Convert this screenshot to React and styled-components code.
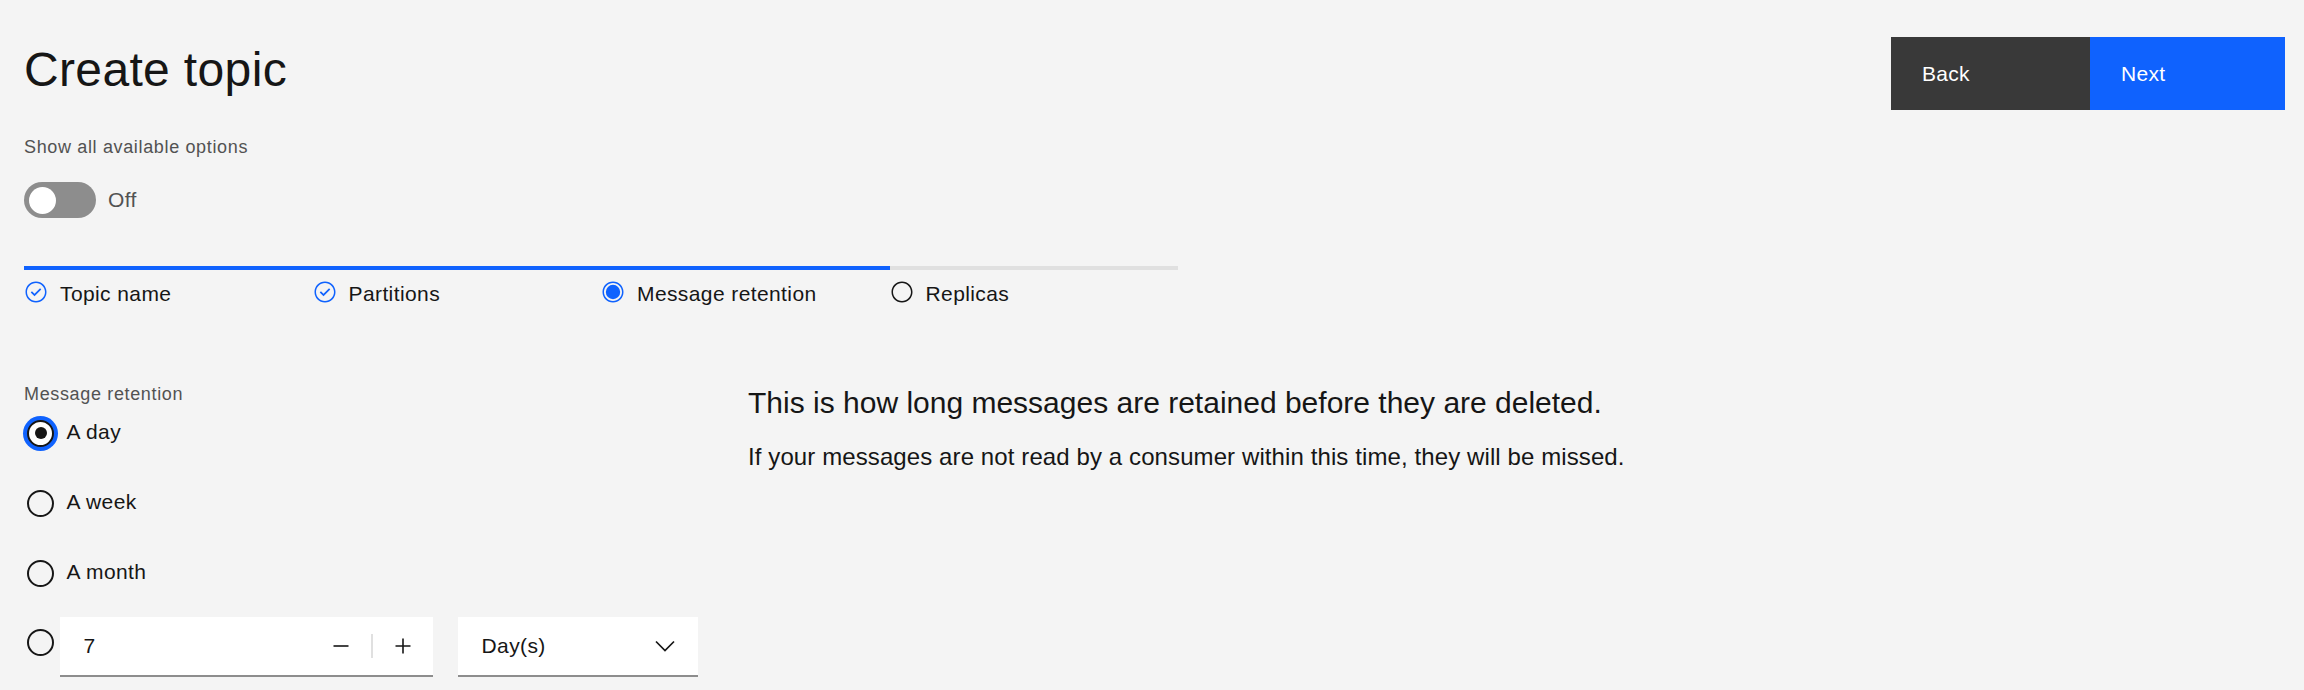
import React from "react"
import styled, { createGlobalStyle } from "styled-components"

const GlobalStyle = createGlobalStyle`
  body {
    margin: 0;
    background: #f4f4f4;
    color: #161616;
    font-family: "Liberation Sans", Arial, sans-serif;
  }
`

const Page = styled.div`
  padding: 37px 19px 0 24px;
`

const Header = styled.header`
  display: flex;
  justify-content: space-between;
  align-items: flex-start;
`

const Title = styled.h1`
  margin: 3px 0 0;
  font-size: 48px;
  line-height: 60px;
  font-weight: 400;
  letter-spacing: 0.35px;
`

const SmallLabel = styled.div`
  font-size: 18px;
  line-height: 24px;
  letter-spacing: 0.65px;
  color: #525252;
  margin-top: ${(p) => p.$top || 0}px;
`

const ToggleRow = styled.div`
  display: flex;
  align-items: center;
  gap: 12px;
  margin-top: 23px;
`

const Track = styled.div`
  width: 72px;
  height: 36px;
  border-radius: 18px;
  background: #8d8d8d;
  display: flex;
  align-items: center;
  padding-left: 4.5px;
  box-sizing: border-box;
`

const Knob = styled.span`
  width: 27px;
  height: 27px;
  border-radius: 50%;
  background: #fff;
`

const ToggleText = styled.span`
  font-size: 21px;
  letter-spacing: 0.4px;
  color: #525252;
`

const ButtonSet = styled.div`
  display: flex;
`

const Button = styled.button`
  width: ${(p) => p.$w}px;
  height: 73px;
  border: 0;
  padding: 0 0 0 31px;
  text-align: left;
  font-family: inherit;
  font-size: 21px;
  letter-spacing: 0.3px;
  color: #fff;
  background: ${(p) => (p.$primary ? "#0f62fe" : "#393939")};
`

const Steps = styled.ol`
  display: flex;
  list-style: none;
  margin: 48px 0 0;
  padding: 0;
`

const Step = styled.li`
  width: 288.5px;
  border-top: 4px solid ${(p) => (p.$done ? "#0f62fe" : "#e0e0e0")};
  padding-top: 10px;
  display: flex;
  align-items: flex-start;
  gap: 12px;
`

const StepText = styled.span`
  font-size: 21px;
  line-height: 24px;
  letter-spacing: 0.4px;
  margin-top: 2px;
`

const Body = styled.div`
  display: grid;
  grid-template-columns: 700px 1fr;
  column-gap: 24px;
  margin-top: 76px;
`

const Options = styled.div`
  display: flex;
  flex-direction: column;
`

const Option = styled.label`
  display: flex;
  align-items: flex-start;
  margin-top: ${(p) => p.$top}px;
`

const Radio = styled.span`
  flex: none;
  width: 27px;
  height: 27px;
  box-sizing: border-box;
  border-radius: 50%;
  border: 2px solid #161616;
  margin: ${(p) => p.$offset || 0}px 0 0 3px;
  background: ${(p) => (p.$checked ? "#fff" : "transparent")};
  display: flex;
  align-items: center;
  justify-content: center;
  box-shadow: ${(p) => (p.$checked ? "0 0 0 4px #0f62fe" : "none")};

  &::after {
    content: "";
    display: ${(p) => (p.$checked ? "block" : "none")};
    width: 12px;
    height: 12px;
    border-radius: 50%;
    background: #161616;
  }
`

const OptionText = styled.span`
  font-size: 21px;
  line-height: 24px;
  letter-spacing: 0.4px;
  margin-left: 12.5px;
`

const Field = styled.div`
  height: 60px;
  box-sizing: border-box;
  background: #fff;
  border-bottom: 2px solid #8d8d8d;
  display: flex;
  align-items: center;
  font-size: 21px;
  letter-spacing: 0.4px;
  width: ${(p) => p.$w}px;
  margin-left: ${(p) => p.$ml}px;
  padding-left: 24px;
`

const FieldValue = styled.span`
  flex: 1;
`

const StepButton = styled.span`
  width: 60px;
  height: 58px;
  display: flex;
  align-items: center;
  justify-content: center;
`

const Divider = styled.span`
  width: 1.5px;
  height: 24px;
  background: #e0e0e0;
`

const Chevron = styled.span`
  width: 43px;
  display: flex;
  justify-content: flex-start;
`

const Help = styled.div`
  padding-top: 1px;
`

const HelpTitle = styled.p`
  margin: 0;
  font-size: 30px;
  line-height: 40px;
`

const HelpText = styled.p`
  margin: 18px 0 0;
  font-size: 24px;
  line-height: 32px;
  letter-spacing: 0.1px;
`

const CheckIcon = () => (
  <svg width="24" height="24" viewBox="0 0 16 16" fill="#0f62fe">
    <path d="M7 10.8L4.5 8.3 5.3 7.5 7 9.2 10.7 5.5 11.5 6.3z" />
    <path d="M8 1C4.1 1 1 4.1 1 8s3.1 7 7 7 7-3.1 7-7-3.1-7-7-7zm0 13c-3.3 0-6-2.7-6-6s2.7-6 6-6 6 2.7 6 6-2.7 6-6 6z" />
  </svg>
)

const CurrentIcon = () => (
  <svg width="24" height="24" viewBox="0 0 16 16" fill="#0f62fe">
    <path d="M8 1C4.1 1 1 4.1 1 8s3.1 7 7 7 7-3.1 7-7-3.1-7-7-7zm0 13c-3.3 0-6-2.7-6-6s2.7-6 6-6 6 2.7 6 6-2.7 6-6 6z" />
    <circle cx="8" cy="8" r="4.8" />
  </svg>
)

const OpenIcon = () => (
  <svg width="24" height="24" viewBox="0 0 16 16" fill="#161616">
    <path d="M8 1C4.1 1 1 4.1 1 8s3.1 7 7 7 7-3.1 7-7-3.1-7-7-7zm0 13c-3.3 0-6-2.7-6-6s2.7-6 6-6 6 2.7 6 6-2.7 6-6 6z" />
  </svg>
)

const steps = [
  { label: "Topic name", state: "done" },
  { label: "Partitions", state: "done" },
  { label: "Message retention", state: "current" },
  { label: "Replicas", state: "open" },
]

const icons = { done: CheckIcon, current: CurrentIcon, open: OpenIcon }

const options = [
  { label: "A day", top: 13.5, checked: true },
  { label: "A week", top: 43 },
  { label: "A month", top: 43 },
]

export default function App() {
  return (
    <>
      <GlobalStyle />
      <Page>
        <Header>
          <div>
            <Title>Create topic</Title>
            <SmallLabel $top={35}>Show all available options</SmallLabel>
            <ToggleRow>
              <Track>
                <Knob />
              </Track>
              <ToggleText>Off</ToggleText>
            </ToggleRow>
          </div>
          <ButtonSet>
            <Button $w={199}>Back</Button>
            <Button $w={195} $primary>
              Next
            </Button>
          </ButtonSet>
        </Header>

        <Steps>
          {steps.map((s) => {
            const Icon = icons[s.state]
            return (
              <Step key={s.label} $done={s.state !== "open"}>
                <Icon />
                <StepText>{s.label}</StepText>
              </Step>
            )
          })}
        </Steps>

        <Body>
          <Options>
            <SmallLabel>Message retention</SmallLabel>
            {options.map((o) => (
              <Option key={o.label} $top={o.top}>
                <Radio $checked={o.checked} />
                <OptionText>{o.label}</OptionText>
              </Option>
            ))}
            <Option $top={30.5}>
              <Radio $offset={11.5} />
              <Field $w={373} $ml={5.5}>
                <FieldValue>7</FieldValue>
                <StepButton>
                  <svg width="24" height="24" viewBox="0 0 24 24">
                    <path d="M4.5 12h15" stroke="#161616" strokeWidth="1.6" />
                  </svg>
                </StepButton>
                <Divider />
                <StepButton>
                  <svg width="24" height="24" viewBox="0 0 24 24">
                    <path d="M4.5 12h15M12 4.5v15" stroke="#161616" strokeWidth="1.6" />
                  </svg>
                </StepButton>
              </Field>
              <Field $w={240} $ml={25}>
                <FieldValue>Day(s)</FieldValue>
                <Chevron>
                  <svg width="20" height="12" viewBox="0 0 20 12">
                    <path d="M1 1.5l9 9 9-9" fill="none" stroke="#161616" strokeWidth="1.7" />
                  </svg>
                </Chevron>
              </Field>
            </Option>
          </Options>
          <Help>
            <HelpTitle>This is how long messages are retained before they are deleted.</HelpTitle>
            <HelpText>If your messages are not read by a consumer within this time, they will be missed.</HelpText>
          </Help>
        </Body>
      </Page>
    </>
  )
}
